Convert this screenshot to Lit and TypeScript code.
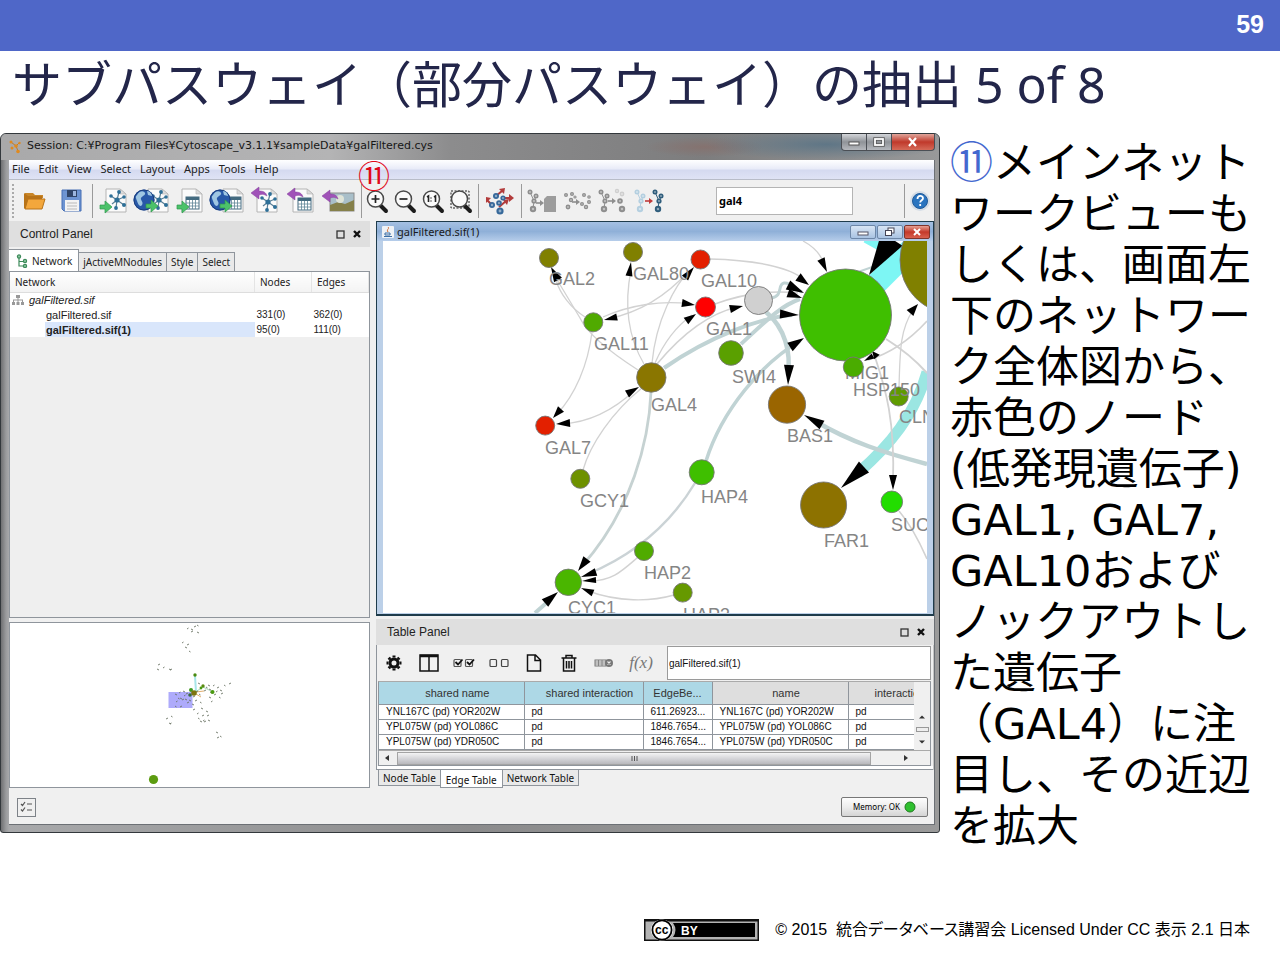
import { LitElement, html, svg, css } from "lit";
import { customElement } from "lit/decorators.js";

type Pt = [number, number];

/* ---------- network data ---------- */

interface GraphNode { x: number; y: number; r: number; fill: string; }
interface GraphLabel { x: number; y: number; text: string; }
interface Edge { d: string; w?: number; color?: string; }
interface Arrow { tip: Pt; base: Pt; w: number; }

const THIN = "#d2d2d2";
const TEAL = "#c0d3d4";

const nodes: GraphNode[] = [
  { x: 549, y: 258, r: 9.5, fill: "#808000" },
  { x: 633, y: 252, r: 9.5, fill: "#808000" },
  { x: 700.5, y: 259.5, r: 9.5, fill: "#e32000" },
  { x: 705.5, y: 307, r: 10, fill: "#ff0000" },
  { x: 758.5, y: 300.5, r: 14, fill: "#d0d0d0" },
  { x: 731, y: 353, r: 12.3, fill: "#5aa000" },
  { x: 845.5, y: 315, r: 46, fill: "#3fbf00" },
  { x: 954, y: 260, r: 54, fill: "#808000" },
  { x: 853.3, y: 367, r: 10, fill: "#4aac00" },
  { x: 898.7, y: 396.5, r: 9.5, fill: "#5f9b00" },
  { x: 593.3, y: 322.3, r: 9.5, fill: "#50aa00" },
  { x: 651.3, y: 377.5, r: 14.7, fill: "#8a7600" },
  { x: 545.2, y: 425.6, r: 9.5, fill: "#e32000" },
  { x: 787, y: 404.6, r: 18.6, fill: "#9a6500" },
  { x: 580.3, y: 478.8, r: 9.5, fill: "#6e9100" },
  { x: 701.7, y: 472.3, r: 12.5, fill: "#3fbf00" },
  { x: 823.6, y: 505, r: 23, fill: "#8d7200" },
  { x: 891.8, y: 501.8, r: 10.8, fill: "#22dd00" },
  { x: 644, y: 551, r: 9.5, fill: "#50ab00" },
  { x: 568.3, y: 582.3, r: 13.2, fill: "#4ab600" },
  { x: 682.7, y: 592.6, r: 9.5, fill: "#669900" },
];

const labels: GraphLabel[] = [
  { x: 549, y: 285, text: "GAL2" },
  { x: 633, y: 280, text: "GAL80" },
  { x: 701, y: 287, text: "GAL10" },
  { x: 706, y: 335, text: "GAL1" },
  { x: 732, y: 383, text: "SWI4" },
  { x: 845, y: 379, text: "MIG1" },
  { x: 899, y: 423, text: "CLN2" },
  { x: 594, y: 350, text: "GAL11" },
  { x: 651, y: 411, text: "GAL4" },
  { x: 787, y: 442, text: "BAS1" },
  { x: 545, y: 454, text: "GAL7" },
  { x: 580, y: 507, text: "GCY1" },
  { x: 701, y: 503, text: "HAP4" },
  { x: 824, y: 547, text: "FAR1" },
  { x: 891, y: 531, text: "SUC2" },
  { x: 644, y: 579, text: "HAP2" },
  { x: 568, y: 614, text: "CYC1" },
  { x: 683, y: 621, text: "HAP3" },
];

const edges: Edge[] = [
  { d: "M927 372C915 415 890 445 858 473", w: 11, color: "#9be6e2" },
  { d: "M874 286L912 248", w: 22, color: "#7df6f4" },
  { d: "M866 238L884 248", w: 10, color: "#7df6f4" },
  { d: "M638 370C610 352 588 335 580 318L556 278" },
  { d: "M585 317C571 308 560 294 556 280" },
  { d: "M644 364C624 330 626 295 631 270" },
  { d: "M652 363C656 320 675 285 690 270" },
  { d: "M603 317C630 305 662 300 690 304" },
  { d: "M689 271C665 297 640 312 608 319" },
  { d: "M655 363C665 340 678 325 692 315" },
  { d: "M657 364C682 334 710 313 738 307", w: 1.6 },
  { d: "M664 368C710 336 760 318 792 315", w: 4, color: TEAL },
  { d: "M741 344C765 322 780 306 800 299", w: 4, color: TEAL },
  { d: "M710 259C750 260 790 266 806 281" },
  { d: "M715 304C745 293 772 290 798 293", w: 1.6 },
  { d: "M771 298C784 296 777 284 784 283C791 282 796 290 802 292", w: 3, color: TEAL },
  { d: "M766 312C785 328 791 352 788 375", w: 4.5, color: TEAL },
  { d: "M706 461C722 410 762 363 800 341", w: 3.5, color: TEAL },
  { d: "M695 483C680 508 650 548 588 574", w: 2.4, color: "#cbd3d6" },
  { d: "M651 392C649 440 632 510 582 566", w: 2.8, color: "#c6d2d2" },
  { d: "M637 558C622 571 612 581 590 581", w: 1.4 },
  { d: "M674 595C650 602 618 602 588 591", w: 1.4 },
  { d: "M535 613L552 598", w: 4, color: TEAL },
  { d: "M592 332C588 365 575 395 557 414" },
  { d: "M635 390C618 406 595 422 562 424" },
  { d: "M583 470C590 445 612 412 642 388" },
  { d: "M803 241Q820 250 825 266" },
  { d: "M858 272L878 265", w: 2, color: TEAL },
  { d: "M815 421C850 442 885 453 927 464", w: 4.5, color: TEAL },
  { d: "M899 388C900 350 900 330 913 310" },
  { d: "M927 321C905 345 885 355 868 360", w: 1.6 },
  { d: "M886 339Q910 354 927 373", w: 2 },
  { d: "M875 357C886 390 895 420 893 484", w: 1.8 },
  { d: "M899 511C911 525 920 543 927 559", w: 1.6 },
];

const arrows: Arrow[] = [
  { tip: [551, 267], base: [558, 280], w: 9 },
  { tip: [631, 262], base: [629, 276], w: 7 },
  { tip: [694, 267], base: [685, 278], w: 8 },
  { tip: [695, 305], base: [682, 303], w: 8 },
  { tip: [604, 320], base: [617, 317], w: 7 },
  { tip: [696, 314], base: [686, 321], w: 8 },
  { tip: [743, 306], base: [730, 309], w: 8 },
  { tip: [799, 315], base: [780, 314], w: 9 },
  { tip: [809, 285], base: [798, 277], w: 9 },
  { tip: [804, 293], base: [788, 285], w: 10 },
  { tip: [802, 298], base: [788, 293], w: 9 },
  { tip: [804, 338], base: [790, 347], w: 10 },
  { tip: [788, 385], base: [789, 365], w: 10 },
  { tip: [827, 272], base: [821, 259], w: 8 },
  { tip: [553, 418], base: [561, 409], w: 8 },
  { tip: [556, 424], base: [570, 423], w: 8 },
  { tip: [639, 387], base: [627, 394], w: 8 },
  { tip: [578, 571], base: [587, 559], w: 9 },
  { tip: [581, 577], base: [596, 572], w: 8 },
  { tip: [582, 581], base: [596, 580], w: 6 },
  { tip: [581, 588], base: [593, 593], w: 7 },
  { tip: [558, 592], base: [545, 603], w: 10 },
  { tip: [804, 415], base: [822, 425], w: 10 },
  { tip: [918, 304], base: [910, 313], w: 9 },
  { tip: [864, 361], base: [873, 356], w: 6 },
  { tip: [872, 351], base: [877, 357], w: 7 },
  { tip: [893, 490], base: [893, 475], w: 8 },
  { tip: [841, 488], base: [864, 467], w: 15 },
  { tip: [869, 275], base: [892, 239], w: 25 },
];

const arrowPoints = ({ tip, base, w }: Arrow): string => {
  const dx = tip[0] - base[0];
  const dy = tip[1] - base[1];
  const len = Math.hypot(dx, dy);
  const nx = (-dy / len) * (w / 2);
  const ny = (dx / len) * (w / 2);
  return `${tip[0]},${tip[1]} ${base[0] + nx},${base[1] + ny} ${base[0] - nx},${base[1] - ny}`;
};

const specks: Pt[] = [
  [188, 629], [192, 629], [195, 627], [198, 625], [192, 632], [198, 632],
  [183, 643], [186, 647], [188, 645], [190, 651],
  [159, 665], [158, 669], [164, 668], [170, 669], [171, 670],
  [225, 685], [230, 684], [209, 685], [214, 686], [210, 689], [218, 688], [207, 687],
  [205, 691], [211, 692], [217, 692], [221, 690], [215, 695], [220, 697], [222, 694],
  [210, 697], [212, 702], [199, 683], [197, 692], [200, 694], [194, 697],
  [176, 694], [180, 693], [184, 691], [187, 694], [179, 698], [183, 700], [186, 699],
  [177, 702], [181, 698], [188, 703], [176, 706], [181, 707], [190, 700], [185, 696],
  [193, 704], [196, 701], [201, 702], [194, 710], [202, 708], [198, 714], [207, 711],
  [203, 716], [199, 718], [208, 716], [201, 721], [204, 721], [209, 720], [205, 722],
  [172, 716], [167, 719], [170, 723], [171, 724], [217, 732], [218, 738], [221, 736],
];

const hubs: GraphNode[] = [
  { x: 195, y: 675, r: 1.7, fill: "#4a8a10" },
  { x: 191, y: 690, r: 2, fill: "#3f9a20" },
  { x: 194, y: 693, r: 2.8, fill: "#7d7410" },
  { x: 203, y: 686, r: 1.7, fill: "#5a8a10" },
  { x: 212.5, y: 692, r: 2, fill: "#4a9a10" },
  { x: 190, y: 695, r: 1.8, fill: "#3a6a40" },
  { x: 201, y: 688, r: 1.4, fill: "#4a9a10" },
  { x: 153.5, y: 779.5, r: 4.6, fill: "#5c9c10" },
];

/* ---------- icons ---------- */

const frame = (body: unknown, w = 34) => svg`
  <svg class="ico" width=${w} height="30" viewBox="0 0 ${w} 30" aria-hidden="true">${body}</svg>`;

const page = (x: number) => svg`
  <path d="M${x} 3h14l6 5v18h-20z" fill="#fbfbfb" stroke="#b4b4b4"/>
  <path d="M${x + 14} 3v5h6z" fill="#dcdcdc" stroke="#b4b4b4" stroke-width=".6"/>`;

const starNet = (x: number, y: number) => svg`
  <g stroke="#5a7f96" stroke-width="1.2" transform="translate(${x} ${y})">
    <path d="M0 0L-6 -4M0 0L2 -8M0 0L7 -3M0 0L7 5M0 0L-1 8M0 0L-5 4"/>
    <g fill="#2e6f97" stroke="none">
      <circle r="2.6"/><circle cx="-6" cy="-4" r="1.8"/><circle cx="2" cy="-8" r="1.9"/>
      <circle cx="7" cy="-3" r="1.8"/><circle cx="7" cy="5" r="2"/><circle cx="-1" cy="8" r="1.9"/>
    </g>
  </g>`;

const gridGlyph = (x: number, y: number) => svg`
  <g transform="translate(${x} ${y})">
    <rect width="13" height="12" fill="#fff" stroke="#446b80"/>
    <rect width="13" height="3" fill="#446b80"/>
    <path d="M3.5 3v9M6.5 3v9M9.5 3v9M0 6h13M0 9h13" stroke="#5f8597" stroke-width=".8"/>
  </g>`;

const greenArrow = (x: number, y: number) => svg`
  <path d="M${x} ${y - 2}h5v-4l7 6-7 6v-4h-5z" fill="#4cc26a" stroke="#2f9a4d" stroke-width=".7"/>`;

const purpleArrow = (x: number, y: number) => svg`
  <path d="M${x} ${y}l8-6v4c4 0 7 1 8 5-3-2-5-2-8-1v4z" fill="#a052b8" stroke="#84409c" stroke-width=".5"/>`;

const globe = svg`
  <circle cx="11" cy="14" r="10.5" fill="#2858a8"/>
  <circle cx="11" cy="14" r="10" fill="none" stroke="#1c3e7c"/>
  <path d="M4 9c3-5 7-4 8-2s-3 3-4 5 3 4 1 7-4-1-5-4-2-4 0-6zM14 5c3 0 5 3 5 5l-4-1z" fill="#9fc6e2"/>`;

const lens = (inner: unknown) => svg`
  <path d="M16 19l6 6" stroke="#1c1c1c" stroke-width="4" stroke-linecap="round"/>
  <circle cx="11.500" cy="13" r="8" fill="#fafafa" stroke="#4a4a4a" stroke-width="1.5"/>
  ${inner}`;

const ball = (x: number, y: number, r: number, c: string) => svg`
  <circle cx=${x} cy=${y} r=${r} fill=${c}/><circle cx=${x} cy=${y} r=${r * 0.4} fill="#fff" fill-opacity=".45"/>`;

const cluster = (x: number, c: string) => svg`
  <path d="M${x + 3} 6L${x + 7} 15L${x + 6} 23M${x + 7} 15L${x + 10} 9" stroke=${c} fill="none"/>
  ${ball(x + 3, 6, 2.5, c)}${ball(x + 9, 10, 2.5, c)}${ball(x + 7, 15, 2.6, c)}${ball(x + 6, 23, 3.2, c)}`;

const smallArrow = (x: number, y: number, c: string) => svg`
  <path d="M${x} ${y}h5" stroke=${c} stroke-width="1.6"/><path d="M${x + 4} ${y - 3}l4 3-4 3z" fill=${c}/>`;

const icons = {
  open: frame(svg`
    <path d="M7 7h8l2 2h8v3H7z" fill="#c98628"/><path d="M6 7v15l1 1h17V10H10z" fill="#b87318"/>
    <path d="M7 23l3-10h17l-3 10z" fill="#f3a73c" stroke="#b87318"/>`),
  save: frame(svg`
    <path d="M7 4h19v21H9l-2-2z" fill="#6d94d2" stroke="#476fb4"/>
    <rect x="12" y="4" width="10" height="7" fill="#2f4468"/><rect x="18" y="5" width="3" height="5" fill="#9db6de"/>
    <rect x="10" y="14" width="14" height="11" fill="#f3f3f3"/><path d="M12 17h10M12 20h10M12 23h10" stroke="#b9b9b9"/>`),
  netFile: frame(svg`${page(9)}${starNet(20, 14)}${greenArrow(3, 21)}`),
  netWeb: frame(svg`${page(15)}${starNet(26, 14)}${globe}${greenArrow(13, 20)}`, 38),
  tableFile: frame(svg`${page(9)}${gridGlyph(13, 11)}${greenArrow(4, 21)}`),
  tableWeb: frame(svg`${page(14)}${gridGlyph(19, 11)}${globe}${greenArrow(11, 20)}`, 38),
  netExport: frame(svg`${page(9)}${starNet(20, 16)}${purpleArrow(3, 7)}`),
  tableExport: frame(svg`${page(9)}${gridGlyph(14, 12)}${purpleArrow(3, 8)}`),
  imageExport: frame(svg`
    <rect x="9" y="7" width="24" height="18" fill="#a9bfc9" stroke="#8a8a8a"/>
    <path d="M9 19l8-3 7 2 9-4v11H9z" fill="#85804a"/><circle cx="19" cy="13" r="4" fill="#dfe4d8"/>${purpleArrow(1, 10)}`, 36),
  zoomIn: frame(lens(svg`<path d="M7.500 13h8M11.500 9v8" stroke="#222" stroke-width="1.7"/>`), 28),
  zoomOut: frame(lens(svg`<path d="M7.500 13h8" stroke="#222" stroke-width="1.7"/>`), 28),
  zoomOne: frame(lens(svg`<path d="M7 11l1.500-1v6M14 11l1.500-1v6" fill="none" stroke="#222" stroke-width="1.600"/><path d="M11 11.500v1M11 14.500v1" stroke="#222" stroke-width="1.400"/>`), 28),
  zoomFit: frame(svg`<rect x="3" y="5" width="18" height="17" fill="none" stroke="#222" stroke-dasharray="2 1.500"/>${lens("")}`, 28),
  layout: frame(svg`
    <g stroke="#b23b3b" stroke-width="2" fill="none"><path d="M13 10l6-5M18 12h9M8 18L4 14M16 21l7-6"/></g>
    <g fill="#b23b3b"><path d="M16 3l6-1-1 6z"/><path d="M26 8l5 4-5 4z"/><path d="M3 17V11l5 1z"/><path d="M20 14l6-1-2 6z"/></g>
    ${ball(13, 10, 3, "#36689a")}${ball(20, 12, 2.6, "#36689a")}${ball(9, 19, 3, "#36689a")}${ball(16, 17, 2.8, "#36689a")}${ball(17, 25, 3.6, "#36689a")}`),
  hide: frame(svg`${cluster(2, "#8e8e8e")}${smallArrow(11, 17, "#8e8e8e")}
    <path d="M19 13l3-3h9v16H19z" fill="#9c9c9c"/>`),
  show: frame(svg`
    <g>${ball(5, 9, 2, "#8e8e8e")}${ball(11, 8, 2, "#8e8e8e")}${ball(10, 14, 2.2, "#8e8e8e")}${ball(7, 21, 2.4, "#8e8e8e")}${ball(14, 11, 1.6, "#8e8e8e")}
    ${ball(23, 9, 2, "#8e8e8e")}${ball(28, 11, 1.8, "#8e8e8e")}${ball(21, 18, 2, "#8e8e8e")}${ball(28, 16, 2, "#8e8e8e")}${ball(25, 21, 2.200, "#8e8e8e")}</g>${smallArrow(11, 16, "#8e8e8e")}`),
  selectNear: frame(svg`${cluster(1, "#8e8e8e")}${smallArrow(11, 15, "#8e8e8e")}
    ${ball(20, 5, 2.200, "#cfcfcf")}${ball(25, 8, 2.400, "#cfcfcf")}${ball(23, 15, 2.800, "#8e8e8e")}${ball(25, 23, 3.200, "#8e8e8e")}`),
  copyNet: frame(svg`${cluster(1, "#b4cfe0")}${smallArrow(12, 15, "#c03a3a")}${cluster(19, "#2f5d7c")}`),
  help: frame(svg`
    <circle cx="13" cy="15" r="10" fill="#d5dde6"/><circle cx="13" cy="15" r="7.500" fill="#2a74bf" stroke="#1f5a9a"/>
    <path d="M10.500 13c0-4 5.500-4 5.500-.8 0 2-2.800 2-2.800 4.300M13.200 18v2" fill="none" stroke="#fff" stroke-width="1.800"/>`, 26),
};

const tIcon = (body: unknown) => svg`
  <svg class="ico" width="24" height="24" viewBox="0 0 24 24" fill="none" stroke="#111" stroke-width="1.500" aria-hidden="true">${body}</svg>`;

const tableIcons = [
  { name: "Table settings", art: tIcon(svg`<circle cx="12" cy="12" r="4" stroke-width="3"/>
      <path d="M12 4.500v2M12 17.500v2M4.500 12h2M17.500 12h2M6.700 6.700l1.500 1.500M15.800 15.800l1.500 1.500M17.300 6.700l-1.500 1.500M6.700 17.300l1.500-1.500" stroke-width="3"/>`) },
  { name: "Show columns", art: tIcon(svg`<rect x="3" y="4" width="18" height="16"/><path d="M3 5h18" stroke-width="2.500"/><path d="M12 5v15"/>`) },
  { name: "Select all", art: tIcon(svg`<rect x="2" y="8.500" width="7" height="7" rx="1" stroke="#555" stroke-width="1.200"/><rect x="13.500" y="8.500" width="7" height="7" rx="1" stroke="#555" stroke-width="1.200"/>
      <path d="M3.500 11l2.500 2.500 4.500-5M15 11l2.500 2.500 4.500-5" stroke-width="1.800"/>`) },
  { name: "Select none", art: tIcon(svg`<rect x="3" y="8.500" width="6.500" height="7" rx="1" stroke="#444" stroke-width="1.200"/><rect x="14.500" y="8.500" width="6.500" height="7" rx="1" stroke="#444" stroke-width="1.200"/>`) },
  { name: "New column", art: tIcon(svg`<path d="M5.500 4h8l5 5v11h-13zM13 4v5.500h5.500"/>`) },
  { name: "Delete column", art: tIcon(svg`<path d="M4.500 7h15M9 7V4.500h6V7M6.500 7v13h11V7M9.500 10v7.500M12 10v7.500M14.500 10v7.500"/>`) },
  { name: "Delete table", art: tIcon(svg`<rect x="3" y="9" width="11" height="6" stroke="#777" stroke-width="1"/><path d="M3 11h11M3 13h11M6.500 9v6M10 9v6" stroke="#777" stroke-width=".8"/>
      <circle cx="17" cy="12" r="4" fill="#777" stroke="none"/><path d="M15.500 10.500l3 3M18.500 10.500l-3 3" stroke="#eee" stroke-width="1.100"/>`) },
];

const edgeRows = [
  ["YNL167C (pd) YOR202W", "pd", "611.26923..."],
  ["YPL075W (pd) YOL086C", "pd", "1846.7654..."],
  ["YPL075W (pd) YDR050C", "pd", "1846.7654..."],
];

const shared = css`
  :host { display: block; }
  * { box-sizing: border-box; }
  button { font: inherit; color: inherit; margin: 0; padding: 0; border: 0; background: none; }
  input { font: inherit; color: inherit; margin: 0; min-width: 0; }
  svg { display: block; }
  .ico { flex: none; }
`;

/* ---------- panel title strip ---------- */

@customElement("panel-title")
class PanelTitle extends LitElement {
  static properties = { label: {} };
  declare label: string;
  static styles = [shared, css`
    .strip { display: flex; align-items: center; gap: 8px; height: 26px; padding: 0 9px 0 11px; background: #dfdfdf;
      font: 12px/16px "Liberation Sans", sans-serif; color: #222; }
    h2 { margin: 0 auto 0 0; font: inherit; }
  `];
  render() {
    return html`<header class="strip">
      <h2>${this.label}</h2>
      <button aria-label="Float"><svg width="9" height="9" viewBox="0 0 9 9"><rect x="1" y="1" width="7" height="7" fill="none" stroke="#333" stroke-width="1.3"/></svg></button>
      <button aria-label="Close"><svg width="8" height="8" viewBox="0 0 8 8"><path d="M1 1l6 6M7 1l-6 6" stroke="#111" stroke-width="2.4"/></svg></button>
    </header>`;
  }
}

/* ---------- left column ---------- */

@customElement("control-panel")
class ControlPanel extends LitElement {
  static styles = [shared, css`
    :host { display: flex; flex-direction: column; font: 11px/14px "Liberation Sans", sans-serif; color: #222; }
    .tabs { display: flex; align-items: flex-end; height: 24px; font: 10px/18px "Noto Sans", sans-serif; }
    .tab { height: 19px; padding: 0 4px; border: 1px solid #8f959c; border-left: 0; border-bottom: 0; background: #e9e9e9; white-space: nowrap; }
    .tab.on { display: flex; align-items: center; gap: 4px; height: 22px; padding: 0 6px 0 7px; background: #fff; }
    .list { flex: 1; background: #efefef; border: 1px solid #8f959c; }
    table { width: 100%; border-collapse: collapse; table-layout: fixed; background: #fff; }
    .num { width: 57px; }
    th { height: 20px; padding: 0 5px; font: 10px/14px "Noto Sans", sans-serif; text-align: left;
      background: linear-gradient(#fff, #f3f3f3); border-bottom: 1px solid #ddd; border-right: 1px solid #e4e4e4; }
    td { height: 15px; padding: 0 2px; line-height: 14px; }
    td.n { font-size: 10px; }
    .root { display: flex; align-items: center; gap: 5px; font-style: italic; }
    .leaf { padding-left: 36px; }
    .picked { font-weight: bold; }
    .picked.leaf { background: linear-gradient(90deg, #fff 35px, #d9e6fb 35px); }
    .map { margin-top: 4px; background: #fff; border: 1px solid #8f959c; }
  `];
  render() {
    return html`
      <panel-title label="Control Panel"></panel-title>
      <div class="tabs" role="tablist">
        <button class="tab on" role="tab" aria-selected="true">
          <svg width="12" height="14" viewBox="0 0 12 14" fill="none" stroke="#3d8a5a" stroke-width="1.200"><path d="M3 4v8h5M3 7.500h5"/><g fill="#8cc9a2"><circle cx="3" cy="2.500" r="1.600"/><circle cx="9" cy="7" r="1.600"/><circle cx="9" cy="12" r="1.600"/></g></svg>
          Network</button>
        <button class="tab" role="tab">jActiveMNodules</button>
        <button class="tab" role="tab">Style</button>
        <button class="tab" role="tab">Select</button>
      </div>
      <div class="list">
        <table>
          <thead><tr><th scope="col">Network</th><th class="num" scope="col">Nodes</th><th class="num" scope="col">Edges</th></tr></thead>
          <tbody>
            <tr><td colspan="3"><div class="root">
              <svg width="12" height="12" viewBox="0 0 12 12" fill="#999"><path d="M4 1h4v3H4zM0 8h3v3H0zM4.500 8h3v3h-3zM9 8h3v3H9zM5.500 4h1v4h-1zM1 5.500h10v1H1zM1 6h1v2H1zM10 6h1v2h-1z"/></svg>
              galFiltered.sif</div></td></tr>
            <tr><td class="leaf">galFiltered.sif</td><td class="n">331(0)</td><td class="n">362(0)</td></tr>
            <tr><td class="leaf picked">galFiltered.sif(1)</td><td class="n">95(0)</td><td class="n">111(0)</td></tr>
          </tbody>
        </table>
      </div>
      <div class="map">
        <svg width="100%" height="164" viewBox="10 623 360 164" preserveAspectRatio="xMinYMin slice" role="img" aria-label="Network overview">
          <rect x="168.500" y="692" width="24" height="16" fill="#aeabfb"/>
          <path d="M195 676L196 692" stroke="#a8e6ea" stroke-width="2"/>
          <path d="M194 693L203 687L213 692" stroke="#a8d8b8" fill="none"/>
          <path d="M196 694L201 697M196 692L204 691" stroke="#e2b070"/>
          ${specks.map(([x, y], i) => svg`<path d="M${x - 1} ${y}l${i % 3 ? 2 : 1.5} ${i % 2 ? 1 : -1}" stroke="#6b7565" stroke-width=".9"/>`)}
          ${hubs.map((h) => svg`<circle cx=${h.x} cy=${h.y} r=${h.r} fill=${h.fill}/>`)}
        </svg>
      </div>`;
  }
}

/* ---------- network view ---------- */

@customElement("network-view")
class NetworkView extends LitElement {
  static styles = [shared, css`
    .win { border: 1px solid #1f3c4c; border-bottom-width: 2px; background: #bcd0e8; padding: 0 6px 1px; }
    .bar { display: flex; align-items: center; gap: 3px; height: 19px; margin: 0 -6px; padding: 0 3px 0 5px;
      background: linear-gradient(#a4c0e2, #8fb0d8 50%, #b6cdea); font: 11px/16px "Noto Sans", sans-serif; color: #1a1a1a; }
    h2 { margin: 0 auto 0 0; font: inherit; }
    .ctl { display: grid; place-items: center; width: 26px; height: 14px; margin-left: -2px; border: 1px solid #6d87a8; border-radius: 2px;
      background: linear-gradient(#d8e5f4, #a9c3e2); }
    .close { background: linear-gradient(#e6a094, #c4392a 50%, #d8604e); border-color: #7e342c; }
    .canvas { background: #fff; }
    .tag { font: 18px "Liberation Sans", sans-serif; fill: #858585; }
  `];
  render() {
    return html`<section class="win">
      <header class="bar">
        <svg width="12" height="12" viewBox="0 0 12 12"><rect width="12" height="12" rx="1" fill="#eef2f6"/><path d="M6 1c2 2-2 2 0 5" stroke="#d0662a" fill="none"/><path d="M3 7h5v2H3zM2 10.500h8" stroke="#3b6da3" fill="none"/></svg>
        <h2>galFiltered.sif(1)</h2>
        <button class="ctl" aria-label="Minimize"><svg width="12" height="8" viewBox="0 0 12 8"><rect x="1" y="4" width="10" height="3" fill="#fff" stroke="#556"/></svg></button>
        <button class="ctl" aria-label="Restore"><svg width="12" height="10" viewBox="0 0 12 10" fill="#fff" stroke="#445"><rect x="4" y="1" width="6" height="5"/><rect x="1.500" y="3.500" width="6" height="5"/></svg></button>
        <button class="ctl close" aria-label="Close"><svg width="10" height="8" viewBox="0 0 10 8"><path d="M2 1l6 6M8 1L2 7" stroke="#fff" stroke-width="2"/></svg></button>
      </header>
      <div class="canvas">
        <svg width="100%" height="372" viewBox="383 241 544 372" preserveAspectRatio="xMinYMin slice" role="img" aria-label="Network graph">
          ${edges.map((e) => svg`<path d=${e.d} fill="none" stroke=${e.color ?? THIN} stroke-width=${e.w ?? 1.3}/>`)}
          ${arrows.map((a) => svg`<polygon points=${arrowPoints(a)}/>`)}
          ${labels.map((l) => svg`<text class="tag" x=${l.x} y=${l.y}>${l.text}</text>`)}
          ${nodes.map((n) => svg`<circle cx=${n.x} cy=${n.y} r=${n.r} fill=${n.fill} stroke="#777" stroke-width=".9"/>`)}
          <text class="tag" x="853" y="396">HSP150</text>
        </svg>
      </div>
    </section>`;
  }
}

/* ---------- table panel ---------- */

@customElement("table-panel")
class TablePanel extends LitElement {
  static styles = [shared, css`
    :host { font: 10px/14px "Liberation Sans", sans-serif; color: #111; }
    .body { border-left: 1px solid #8f959c; border-right: 1px solid #c4c4c4; padding: 0 2px 0 1px; }
    .tools { display: flex; align-items: center; height: 36px; margin-left: -2px; }
    .tools button { display: grid; place-items: center; width: 35px; height: 34px; flex: none; }
    .fx { font: italic 17px/20px "Liberation Serif", serif; color: #777; }
    .tools .fx { width: 46px; padding-right: 6px; }
    .name { flex: 1; height: 34px; padding: 0 1px; border: 1px solid #9a9a9a; background: #fff; }
    .view { display: grid; grid-template-columns: minmax(0, 1fr) 16px; border: 1px solid #8f959c; border-top-color: #aaa; }
    .clip { overflow: hidden; height: 68px; }
    table { width: 100%; border-collapse: collapse; table-layout: fixed; background: #fff; }
    th { height: 22px; padding: 0 4px; font-weight: normal; font-size: 11px; color: #333; background: #dedede; border-right: 1px solid #8f959c; border-bottom: 1px solid #8f959c; white-space: nowrap; overflow: hidden; }
    th.key { background: #add8e6; }
    th.c1 { padding-left: 16px; }
    th.c2 { padding-left: 16px; }
    th.c4 { padding-left: 16px; }
    th.cut { padding: 0 0 0 26px; text-align: left; border-right: 0; }
    td { height: 15px; padding: 0 7px; border-right: 1px solid #8f959c; border-bottom: 1px solid #8f959c; white-space: nowrap; overflow: hidden; }
    td:last-child { border-right: 0; }
    td.val { text-align: right; }
    .c1 { width: 145px; } .c2 { width: 119px; } .c3 { width: 69px; } .c4 { width: 136px; }
    .vs { display: flex; flex-direction: column; align-items: center; justify-content: flex-end; gap: 8px; padding: 0 1px 6px; background: #f0f0f0; }
    .thumb { width: 13px; height: 5px; border: 1px solid #999; background: #eee; }
    .hs { grid-column: 1 / -1; display: flex; align-items: center; height: 15px; padding: 0 22px 0 6px; background: #f0f0f0; border-top: 1px solid #aaa; }
    .bar { display: grid; place-items: center; flex: 1; height: 13px; margin: 0 33px 0 8px; border: 1px solid #a4a4a4; background: linear-gradient(#f4f4f4, #d0d0d4 60%, #b8b8bc); }
    .foot { height: 4px; border-bottom: 1px solid #8f959c; background: #fff; margin: 0 -2px 0 -1px; }
    .tabs { display: flex; align-items: flex-start; padding-left: 2px; font: 10px/14px "Noto Sans", sans-serif; }
    .tab { height: 16px; padding: 0 4px; border: 1px solid #8f959c; border-top: 0; background: #e9e9e9; }
    .tab.on { height: 18px; padding: 3px 5px 0; margin: 0 -1px; background: #fff; line-height: 13px; }
  `];
  render() {
    return html`
      <panel-title label="Table Panel"></panel-title>
      <div class="body">
        <div class="tools">
          ${tableIcons.map((t) => html`<button aria-label=${t.name}>${t.art}</button>`)}
          <button class="fx" aria-label="Function builder">f(x)</button>
          <input class="name" type="text" aria-label="Cell value" .value=${"galFiltered.sif(1)"} />
        </div>
        <div class="view">
          <div class="clip">
            <table>
              <thead><tr>
                <th class="key c1" scope="col">shared name</th><th class="key c2" scope="col">shared interaction</th>
                <th class="key c3" scope="col">EdgeBe...</th><th class="c4" scope="col">name</th><th class="cut" scope="col">interaction</th>
              </tr></thead>
              <tbody>${edgeRows.map(([n, i, v]) => html`<tr><td>${n}</td><td>${i}</td><td class="val">${v}</td><td>${n}</td><td>${i}</td></tr>`)}</tbody>
            </table>
          </div>
          <div class="vs">
            <svg width="6" height="4" viewBox="0 0 6 4"><path d="M0 3.500L3 .5l3 3z" fill="#333"/></svg>
            <span class="thumb"></span>
            <svg width="6" height="4" viewBox="0 0 6 4"><path d="M0 .5L3 3.500l3-3z" fill="#333"/></svg>
          </div>
          <div class="hs">
            <svg width="4" height="6" viewBox="0 0 4 6"><path d="M4 0L0 3l4 3z" fill="#333"/></svg>
            <span class="bar"><svg width="7" height="5" viewBox="0 0 7 5"><path d="M1 0v5M3.500 0v5M6 0v5" stroke="#555"/></svg></span>
            <svg width="4" height="6" viewBox="0 0 4 6"><path d="M0 0l4 3-4 3z" fill="#333"/></svg>
          </div>
        </div>
        <div class="foot"></div>
      </div>
      <div class="tabs" role="tablist">
        <button class="tab" role="tab">Node Table</button>
        <button class="tab on" role="tab" aria-selected="true">Edge Table</button>
        <button class="tab" role="tab">Network Table</button>
      </div>`;
  }
}

/* ---------- application window ---------- */

@customElement("cytoscape-window")
class CytoscapeWindow extends LitElement {
  static styles = [shared, css`
    .win { position: relative; border: 1px solid #33383c; border-radius: 6px 6px 3px 3px; padding: 0 4px 7px 8px;
      background: linear-gradient(90deg, #6f7072 0, #9a9b9d 5px, #a8a9ab 8px, #8b8b8c 50%, #9a9a9a 100%); }
    .top { display: flex; align-items: flex-start; height: 26px; margin: 0 -4px 0 -8px; padding: 0 4px 0 8px; border-radius: 5px 5px 0 0;
      background: radial-gradient(ellipse 120px 16px at 88% 40%, #5f7686, transparent), radial-gradient(ellipse 60px 10px at 75% 50%, #85726f, transparent),
        linear-gradient(90deg, #a9a9aa, #b4b4b5 35%, #8c8c8d 48%, #7d7d7e 75%, #98999a); }
    .logo { margin: 6px 6px 0 0; }
    h1 { margin: 4px auto 0 0; font: 11px/16px "DejaVu Sans", sans-serif; color: #161616; }
    .ctl { display: grid; place-items: center; width: 26px; height: 17px; border: 1px solid #4b4f55; border-top: 0; background: linear-gradient(#d4d6da, #8f9398 50%, #b5b8bd); }
    .ctl:first-of-type { border-radius: 0 0 0 4px; }
    .ctl + .ctl { margin-left: -1px; }
    .ctl.close { width: 44px; border-radius: 0 0 4px 0; background: linear-gradient(#e0a59b, #c0392b 50%, #d56a58); }
    .client { background: #f0f0f0; border: 1px solid #6c7075; border-width: 0 1px 1px 0; }
    .menu { display: flex; gap: 9px; height: 20px; padding: 0 3px; background: linear-gradient(#fff, #e9ecf8 45%, #d5daf0 55%, #dfe3f5); border-bottom: 1px solid #b8bcc8;
      font: 11px/16px "Noto Sans", sans-serif; color: #222; }
    .menu button { height: 17px; }
    .bar { display: flex; align-items: center; height: 41px; padding-right: 1px; }
    .bar button { display: grid; place-items: center; flex: none; width: 38px; height: 34px; }
    .bar .z { width: 28px; }
    .bar .m { width: 36px; }
    .bar .w { width: 40px; }
    .bar .h { width: 26px; }
    .grip { width: 2px; height: 36px; margin: 0 2px 0 3px; background: radial-gradient(circle, #aaa 1px, transparent 1px) 0 0 / 2px 4px; }
    .sep { width: 1px; height: 34px; margin: 0 2px; background: #9a9a9a; flex: none; }
    .find { width: 137px; height: 28px; margin: 0 auto 0 48px; padding: 0 2px; border: 1px solid #b4b4b4; background: #fff; font: bold 11px/14px "Noto Sans", sans-serif; }
    .cols { display: grid; grid-template-columns: 361px minmax(0, 1fr); gap: 6px; }
    .right { display: flex; flex-direction: column; gap: 3px; }
    .status { display: flex; justify-content: space-between; align-items: center; height: 36px; padding: 2px 6px 0 8px; }
    .tasks { display: grid; place-items: center; width: 19px; height: 19px; border: 1px solid #7d8288; }
    .mem { display: flex; align-items: center; justify-content: center; gap: 4px; width: 87px; height: 20px; border: 1px solid #777; border-radius: 2px;
      background: linear-gradient(#fdfdfd, #ededed 50%, #d4d4d4); font: 8px/12px "Noto Sans", sans-serif; color: #000; }
    .step { position: absolute; left: 357px; top: 24px; font: 32px/32px "Noto Sans CJK JP", sans-serif; color: #e00a1a; }
  `];
  render() {
    const menu = ["File", "Edit", "View", "Select", "Layout", "Apps", "Tools", "Help"];
    return html`<section class="win">
      <header class="top">
        <svg class="logo" width="12" height="14" viewBox="0 0 12 14"><path d="M2 2l5 4 2 5M7 6l3-3" stroke="#c07a28" fill="none"/><g fill="#e08a1e"><circle cx="2" cy="2" r="1.500"/><circle cx="7" cy="6" r="1.800"/><circle cx="9" cy="11.500" r="1.800"/><circle cx="3" cy="8" r="1.500"/><circle cx="10.500" cy="3" r="1.200"/></g></svg>
        <h1>Session: C:¥Program Files¥Cytoscape_v3.1.1¥sampleData¥galFiltered.cys</h1>
        <button class="ctl" aria-label="Minimize"><svg width="12" height="8" viewBox="0 0 12 8"><rect x="1" y="4" width="10" height="3" fill="#fff" stroke="#555"/></svg></button>
        <button class="ctl" aria-label="Maximize"><svg width="12" height="10" viewBox="0 0 12 10"><rect x="2" y="2" width="8" height="6" fill="none" stroke="#555" stroke-width="3.400"/><rect x="2" y="2" width="8" height="6" fill="none" stroke="#fff" stroke-width="1.800"/></svg></button>
        <button class="ctl close" aria-label="Close"><svg width="12" height="10" viewBox="0 0 12 10"><path d="M2 1l7 8M9 1L2 9" stroke="#fff" stroke-width="2.200"/></svg></button>
      </header>
      <div class="client">
        <nav class="menu" aria-label="Menu">${menu.map((m) => html`<button>${m}</button>`)}</nav>
        <div class="bar" role="toolbar" aria-label="Tools">
          <span class="grip"></span>
          <button aria-label="Open">${icons.open}</button>
          <button class="m" aria-label="Save">${icons.save}</button>
          <span class="sep"></span>
          <button aria-label="Import network from file">${icons.netFile}</button>
          <button aria-label="Import network from web">${icons.netWeb}</button>
          <button aria-label="Import table from file">${icons.tableFile}</button>
          <button aria-label="Import table from web">${icons.tableWeb}</button>
          <button class="m" aria-label="Export network">${icons.netExport}</button>
          <button class="m" aria-label="Export table">${icons.tableExport}</button>
          <button class="w" aria-label="Export image">${icons.imageExport}</button>
          <span class="sep"></span>
          <button class="z" aria-label="Zoom in">${icons.zoomIn}</button>
          <button class="z" aria-label="Zoom out">${icons.zoomOut}</button>
          <button class="z" aria-label="Actual size">${icons.zoomOne}</button>
          <button class="z" aria-label="Fit">${icons.zoomFit}</button>
          <span class="sep"></span>
          <button aria-label="Apply layout">${icons.layout}</button>
          <span class="sep"></span>
          <button class="m" aria-label="Hide selected">${icons.hide}</button>
          <button class="m" aria-label="Show all">${icons.show}</button>
          <button class="m" aria-label="First neighbors">${icons.selectNear}</button>
          <button class="m" aria-label="New network from selection">${icons.copyNet}</button>
          <input class="find" type="text" aria-label="Search" .value=${"gal4"} />
          <span class="sep"></span>
          <button class="h" aria-label="Help">${icons.help}</button>
        </div>
        <div class="cols">
          <control-panel></control-panel>
          <div class="right"><network-view></network-view><table-panel></table-panel></div>
        </div>
        <footer class="status">
          <button class="tasks" aria-label="Tasks"><svg width="13" height="12" viewBox="0 0 13 12" stroke="#555" fill="none"><path d="M1 3l1.500 1.500L5 1M1 8.500L2.500 10 5 6.500M7 3h5M7 9h5" stroke-width="1.200"/></svg></button>
          <button class="mem">Memory: OK <svg width="12" height="12" viewBox="0 0 12 12"><circle cx="6" cy="6" r="5" fill="#2fc02f" stroke="#1f7a1f"/></svg></button>
        </footer>
      </div>
      <span class="step">⑪</span>
    </section>`;
  }
}

/* ---------- slide ---------- */

@customElement("app-root")
class AppRoot extends LitElement {
  static styles = [shared, css`
    :host { min-height: 100vh; background: #fff; font-family: "DejaVu Sans", "Noto Sans CJK JP", sans-serif; color: #000; }
    .slide { display: flex; flex-direction: column; min-height: 100vh; }
    .band { display: flex; justify-content: flex-end; align-items: center; height: 51px; padding: 0 16px 3px; background: #4f67c8;
      color: #fff; font: bold 25px/28px "Liberation Sans", sans-serif; }
    h1 { margin: 0; padding: 0 12px 16px; font: 400 50px/66px "Noto Sans", "Noto Sans CJK JP", sans-serif; color: #23264a; white-space: nowrap; }
    .main { display: grid; grid-template-columns: minmax(0, 47fr) minmax(0, 17fr); align-items: start; }
    .note { margin: 0; padding: 1px 0 0 10px; font-size: 43px; line-height: 51px; white-space: nowrap; }
    .mark { font-family: "Noto Sans CJK JP", sans-serif; color: #4468cf; }
    .credit { display: flex; justify-content: flex-end; align-items: center; gap: 16px; margin-top: auto; padding: 0 30px 18px 0;
      font: 16px/24px "Liberation Sans", "Noto Sans CJK JP", sans-serif; font-feature-settings: "palt"; white-space: pre; }
    .by { font: bold 12px "Liberation Sans", sans-serif; fill: #fff; }
    .cc { font: bold 12px "Liberation Sans", sans-serif; fill: #000; }
  `];
  render() {
    return html`<main class="slide">
      <div class="band">59</div>
      <h1>サブパスウェイ（部分パスウェイ）の抽出 5 of 8</h1>
      <div class="main">
        <cytoscape-window></cytoscape-window>
        <p class="note"><span class="mark">⑪</span>メインネット<br />ワークビューも<br />しくは、画面左<br />下のネットワー<br />ク全体図から、<br />赤色のノード<br />(低発現遺伝子)<br />GAL1, GAL7,<br />GAL10および<br />ノックアウトし<br />た遺伝子<br />（GAL4）に注<br />目し、その近辺<br />を拡大</p>
      </div>
      <footer class="credit"><svg width="115" height="22" viewBox="0 0 115 22" role="img" aria-label="Creative Commons BY">
          <rect width="115" height="22" fill="#111"/><rect x="1.500" y="2.500" width="112" height="18" fill="#b4b4b4"/>
          <path d="M29 4h82v14H29q5-7 0-14z"/>
          <ellipse cx="18" cy="11" rx="11" ry="10.500" fill="#fff"/><circle cx="18" cy="11" r="9.600" fill="#fff" stroke="#000" stroke-width="1.800"/>
          <text class="cc" x="11" y="15">cc</text><text class="by" x="37" y="16">BY</text>
        </svg><span>© 2015  統合データベース講習会 Licensed Under CC 表示 2.1 日本</span></footer>
    </main>`;
  }
}
